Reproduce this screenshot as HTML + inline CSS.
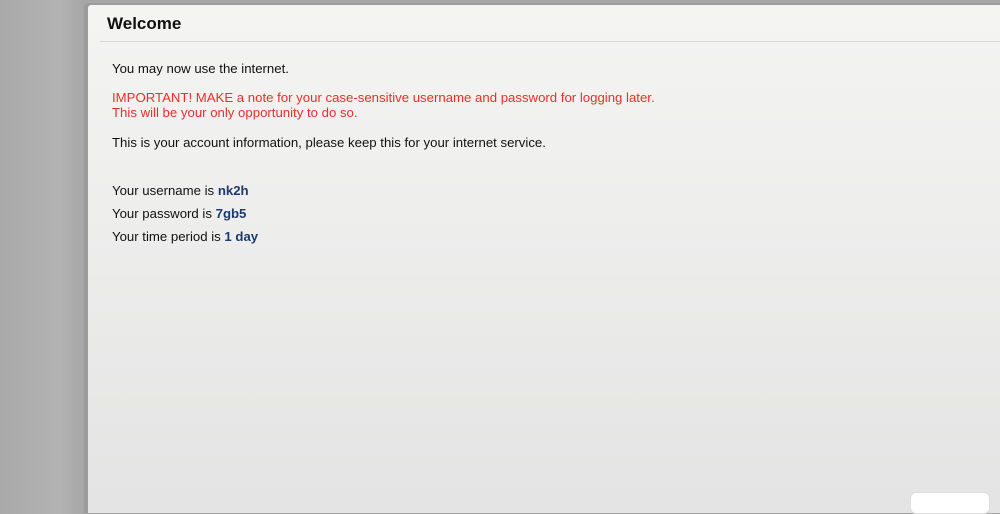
<!DOCTYPE html>
<html><head><style>
html,body{margin:0;padding:0;width:1000px;height:500px;overflow:hidden;font-family:"Liberation Sans",sans-serif}
body{background:linear-gradient(90deg,#a9a9a9 0,#b3b3b3 60px,#a6a6a6 84px)}
.panel{position:absolute;left:84px;top:3px;width:930px;height:510px;background:#9c9c9c;border-radius:5px 0 0 0}
.inner{position:absolute;left:4px;top:2px;right:0;bottom:0;background:linear-gradient(180deg,#f4f4f3 0,#eeeeed 200px,#e3e4e3 500px);border-radius:3px 0 0 0}
.hdr{position:absolute;left:12px;top:0;right:0;height:36px;border-bottom:1px solid #d6d8de}
.hdr h1{margin:0;position:absolute;left:7px;top:9px;font-size:17px;font-weight:bold;color:#111}
.c{position:absolute;left:24px;top:-1px;font-size:13.2px;color:#111}
.c div{position:absolute;white-space:nowrap}
.red{color:#e8302a}
b{color:#1c3a6b}
.btn{position:absolute;left:910px;top:492px;width:78px;height:20px;background:#fff;border-radius:6px;border:1px solid #ddd}
</style></head><body>
<div class="panel"><div class="inner">
<div class="hdr"><h1>Welcome</h1></div>
<div class="c">
<div style="top:57px">You may now use the internet.</div>
<div class="red" style="top:86px">IMPORTANT! MAKE a note for your case-sensitive username and password for logging later.</div>
<div class="red" style="top:101px">This will be your only opportunity to do so.</div>
<div style="top:131px">This is your account information, please keep this for your internet service.</div>
<div style="top:179px">Your username is <b>nk2h</b></div>
<div style="top:202px">Your password is <b>7gb5</b></div>
<div style="top:225px">Your time period is <b>1 day</b></div>
</div>
</div></div>
<div class="btn"></div>
</body></html>
